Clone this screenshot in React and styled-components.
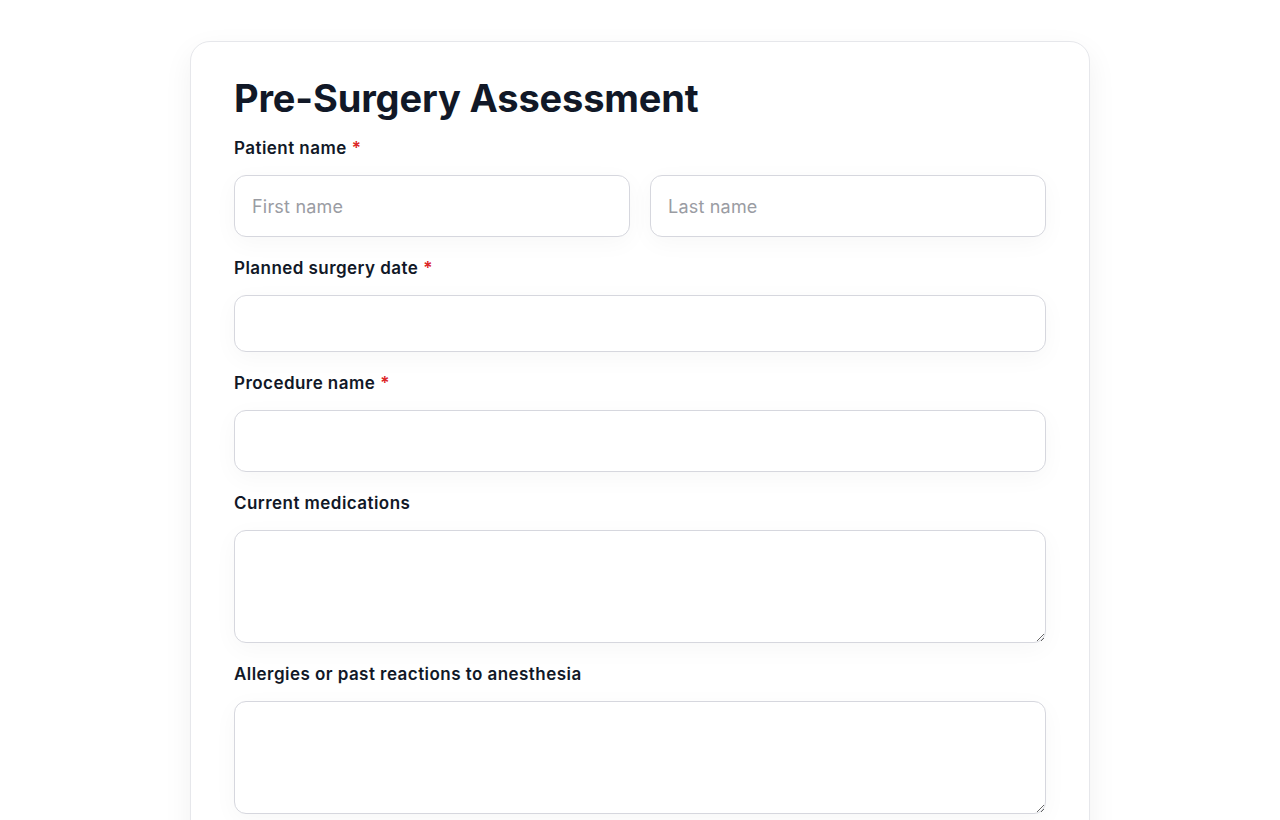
import styled, { createGlobalStyle } from "styled-components";

const GlobalStyle = createGlobalStyle`
  body {
    margin: 0;
    background: #ffffff;
    font-family: Inter, "Noto Sans", sans-serif;
    color: #111827;
  }
`;

const Page = styled.div`
  display: flex;
  justify-content: center;
  padding-top: 41px;
`;

const Card = styled.form`
  width: 812px;
  padding: 28px 43px 40px 43px;
  border: 1px solid #e6e7eb;
  border-radius: 20px;
  box-shadow: 0 10px 30px rgba(17, 24, 39, 0.06);
  background: #fff;
`;

const Title = styled.h1`
  margin: 0 0 10px;
  font-size: 38px;
  line-height: 56px;
  font-weight: 700;
  letter-spacing: -0.15px;
  color: #111827;
`;

const Field = styled.div`
  display: flex;
  flex-direction: column;
  margin-bottom: 19px;
`;

const Label = styled.label`
  font-size: 17px;
  line-height: 24px;
  font-weight: 600;
  letter-spacing: 0.45px;
  margin-bottom: 15px;
  color: #111827;
`;

const Star = styled.span`
  color: #dc2626;
  margin-left: 5px;
`;

const Row = styled.div`
  display: grid;
  grid-template-columns: 1fr 1fr;
  gap: 20px;
`;

const Input = styled.input`
  box-sizing: border-box;
  width: 100%;
  height: ${(p) => p.h || 62}px;
  padding: 0 17px;
  border: 1px solid #d6d7de;
  border-radius: 12px;
  font-family: inherit;
  font-size: 18px;
  letter-spacing: 0.2px;
  color: #111827;
  background: #fff;
  box-shadow: 0 6px 24px rgba(17, 24, 39, 0.035);
  outline: none;

  &::placeholder {
    color: #9a9ca3;
  }
`;

const TextArea = styled.textarea`
  box-sizing: border-box;
  width: 100%;
  height: 113px;
  padding: 14px 17px;
  border: 1px solid #d6d7de;
  border-radius: 12px;
  font-family: inherit;
  font-size: 18px;
  background: #fff;
  box-shadow: 0 6px 24px rgba(17, 24, 39, 0.035);
  outline: none;
  display: block;
`;

export default function App() {
  return (
    <>
      <GlobalStyle />
      <Page>
        <Card>
          <Title>Pre-Surgery Assessment</Title>
          <Field>
            <Label>
              Patient name<Star>*</Star>
            </Label>
            <Row>
              <Input placeholder="First name" />
              <Input placeholder="Last name" />
            </Row>
          </Field>
          <Field>
            <Label>
              Planned surgery date<Star>*</Star>
            </Label>
            <Input h={57} />
          </Field>
          <Field>
            <Label>
              Procedure name<Star>*</Star>
            </Label>
            <Input />
          </Field>
          <Field>
            <Label>Current medications</Label>
            <TextArea />
          </Field>
          <Field>
            <Label>Allergies or past reactions to anesthesia</Label>
            <TextArea />
          </Field>
        </Card>
      </Page>
    </>
  );
}
